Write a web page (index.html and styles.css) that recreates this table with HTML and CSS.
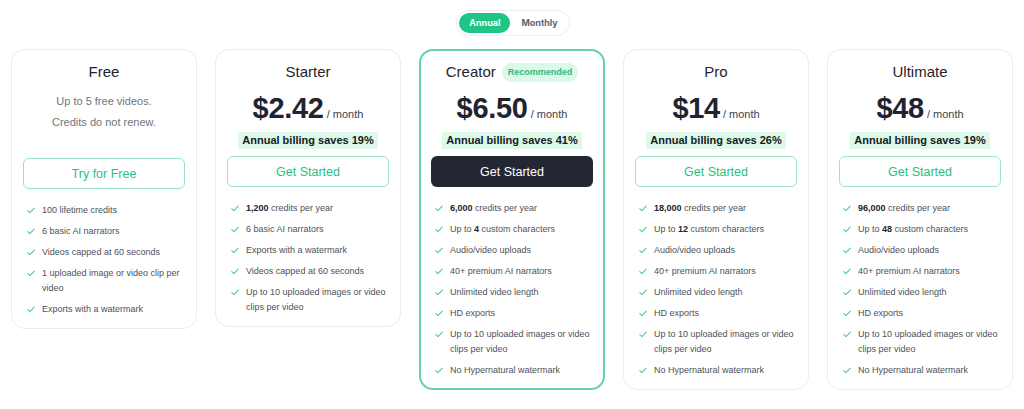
FILE: index.html
```html
<!DOCTYPE html>
<html>
<head>
<meta charset="utf-8">
<link rel="stylesheet" href="styles.css">
</head>
<body>
<div class="page">
  <div class="toggle-row">
    <div class="toggle">
      <span class="opt active">Annual</span>
      <span class="opt">Monthly</span>
    </div>
  </div>
  <div class="plans">
    <div class="card">
      <div class="title">Free</div>
      <div class="sub sub-first">Up to 5 free videos.</div>
      <div class="sub">Credits do not renew.</div>
      <div class="btn outline free-btn">Try for Free</div>
      <ul class="features">
        <li><svg class="chk" viewBox="0 0 10 8"><path d="M1 4.2 L3.6 6.6 L9 1"/></svg><span>100 lifetime credits</span></li>
        <li><svg class="chk" viewBox="0 0 10 8"><path d="M1 4.2 L3.6 6.6 L9 1"/></svg><span>6 basic AI narrators</span></li>
        <li><svg class="chk" viewBox="0 0 10 8"><path d="M1 4.2 L3.6 6.6 L9 1"/></svg><span>Videos capped at 60 seconds</span></li>
        <li><svg class="chk" viewBox="0 0 10 8"><path d="M1 4.2 L3.6 6.6 L9 1"/></svg><span>1 uploaded image or video clip per video</span></li>
        <li><svg class="chk" viewBox="0 0 10 8"><path d="M1 4.2 L3.6 6.6 L9 1"/></svg><span>Exports with a watermark</span></li>
      </ul>
    </div>
    <div class="card">
      <div class="title">Starter</div>
      <div class="price"><span class="amt">$2.42</span><span class="per">/ month</span></div>
      <div class="save-row"><span class="save">Annual billing saves 19%</span></div>
      <div class="btn outline">Get Started</div>
      <ul class="features">
        <li><svg class="chk" viewBox="0 0 10 8"><path d="M1 4.2 L3.6 6.6 L9 1"/></svg><span><b>1,200</b> credits per year</span></li>
        <li><svg class="chk" viewBox="0 0 10 8"><path d="M1 4.2 L3.6 6.6 L9 1"/></svg><span>6 basic AI narrators</span></li>
        <li><svg class="chk" viewBox="0 0 10 8"><path d="M1 4.2 L3.6 6.6 L9 1"/></svg><span>Exports with a watermark</span></li>
        <li><svg class="chk" viewBox="0 0 10 8"><path d="M1 4.2 L3.6 6.6 L9 1"/></svg><span>Videos capped at 60 seconds</span></li>
        <li><svg class="chk" viewBox="0 0 10 8"><path d="M1 4.2 L3.6 6.6 L9 1"/></svg><span>Up to 10 uploaded images or video clips per video</span></li>
      </ul>
    </div>
    <div class="card featured">
      <div class="title creator-title">Creator <span class="badge">Recommended</span></div>
      <div class="price"><span class="amt">$6.50</span><span class="per">/ month</span></div>
      <div class="save-row"><span class="save">Annual billing saves 41%</span></div>
      <div class="btn dark">Get Started</div>
      <ul class="features">
        <li><svg class="chk" viewBox="0 0 10 8"><path d="M1 4.2 L3.6 6.6 L9 1"/></svg><span><b>6,000</b> credits per year</span></li>
        <li><svg class="chk" viewBox="0 0 10 8"><path d="M1 4.2 L3.6 6.6 L9 1"/></svg><span>Up to <b>4</b> custom characters</span></li>
        <li><svg class="chk" viewBox="0 0 10 8"><path d="M1 4.2 L3.6 6.6 L9 1"/></svg><span>Audio/video uploads</span></li>
        <li><svg class="chk" viewBox="0 0 10 8"><path d="M1 4.2 L3.6 6.6 L9 1"/></svg><span>40+ premium AI narrators</span></li>
        <li><svg class="chk" viewBox="0 0 10 8"><path d="M1 4.2 L3.6 6.6 L9 1"/></svg><span>Unlimited video length</span></li>
        <li><svg class="chk" viewBox="0 0 10 8"><path d="M1 4.2 L3.6 6.6 L9 1"/></svg><span>HD exports</span></li>
        <li><svg class="chk" viewBox="0 0 10 8"><path d="M1 4.2 L3.6 6.6 L9 1"/></svg><span>Up to 10 uploaded images or video clips per video</span></li>
        <li><svg class="chk" viewBox="0 0 10 8"><path d="M1 4.2 L3.6 6.6 L9 1"/></svg><span>No Hypernatural watermark</span></li>
      </ul>
    </div>
    <div class="card">
      <div class="title">Pro</div>
      <div class="price"><span class="amt">$14</span><span class="per">/ month</span></div>
      <div class="save-row"><span class="save">Annual billing saves 26%</span></div>
      <div class="btn outline">Get Started</div>
      <ul class="features">
        <li><svg class="chk" viewBox="0 0 10 8"><path d="M1 4.2 L3.6 6.6 L9 1"/></svg><span><b>18,000</b> credits per year</span></li>
        <li><svg class="chk" viewBox="0 0 10 8"><path d="M1 4.2 L3.6 6.6 L9 1"/></svg><span>Up to <b>12</b> custom characters</span></li>
        <li><svg class="chk" viewBox="0 0 10 8"><path d="M1 4.2 L3.6 6.6 L9 1"/></svg><span>Audio/video uploads</span></li>
        <li><svg class="chk" viewBox="0 0 10 8"><path d="M1 4.2 L3.6 6.6 L9 1"/></svg><span>40+ premium AI narrators</span></li>
        <li><svg class="chk" viewBox="0 0 10 8"><path d="M1 4.2 L3.6 6.6 L9 1"/></svg><span>Unlimited video length</span></li>
        <li><svg class="chk" viewBox="0 0 10 8"><path d="M1 4.2 L3.6 6.6 L9 1"/></svg><span>HD exports</span></li>
        <li><svg class="chk" viewBox="0 0 10 8"><path d="M1 4.2 L3.6 6.6 L9 1"/></svg><span>Up to 10 uploaded images or video clips per video</span></li>
        <li><svg class="chk" viewBox="0 0 10 8"><path d="M1 4.2 L3.6 6.6 L9 1"/></svg><span>No Hypernatural watermark</span></li>
      </ul>
    </div>
    <div class="card">
      <div class="title">Ultimate</div>
      <div class="price"><span class="amt">$48</span><span class="per">/ month</span></div>
      <div class="save-row"><span class="save">Annual billing saves 19%</span></div>
      <div class="btn outline">Get Started</div>
      <ul class="features">
        <li><svg class="chk" viewBox="0 0 10 8"><path d="M1 4.2 L3.6 6.6 L9 1"/></svg><span><b>96,000</b> credits per year</span></li>
        <li><svg class="chk" viewBox="0 0 10 8"><path d="M1 4.2 L3.6 6.6 L9 1"/></svg><span>Up to <b>48</b> custom characters</span></li>
        <li><svg class="chk" viewBox="0 0 10 8"><path d="M1 4.2 L3.6 6.6 L9 1"/></svg><span>Audio/video uploads</span></li>
        <li><svg class="chk" viewBox="0 0 10 8"><path d="M1 4.2 L3.6 6.6 L9 1"/></svg><span>40+ premium AI narrators</span></li>
        <li><svg class="chk" viewBox="0 0 10 8"><path d="M1 4.2 L3.6 6.6 L9 1"/></svg><span>Unlimited video length</span></li>
        <li><svg class="chk" viewBox="0 0 10 8"><path d="M1 4.2 L3.6 6.6 L9 1"/></svg><span>HD exports</span></li>
        <li><svg class="chk" viewBox="0 0 10 8"><path d="M1 4.2 L3.6 6.6 L9 1"/></svg><span>Up to 10 uploaded images or video clips per video</span></li>
        <li><svg class="chk" viewBox="0 0 10 8"><path d="M1 4.2 L3.6 6.6 L9 1"/></svg><span>No Hypernatural watermark</span></li>
      </ul>
    </div>
  </div>
</div>
</body>
</html>
```
FILE: styles.css
```css
* { box-sizing: border-box; }
html, body { margin: 0; padding: 0; background: #ffffff; }
body { font-family: "Liberation Sans", Arial, sans-serif; color: #1f2430; }
.page { padding: 10px 11px 0; }
.toggle-row { display: flex; justify-content: center; }
.toggle {
  display: flex; align-items: center; gap: 2px;
  border: 1px solid #eceef1; border-radius: 14px; padding: 2px;
  height: 26px; margin-left: 2px;
}
.opt {
  font-family: Inter, "Liberation Sans", sans-serif;
  font-size: 9px; font-weight: 700; color: #5d6470;
  height: 20px; line-height: 20px; padding: 0 9px; border-radius: 10px;
}
.opt.active { background: #1fc584; color: #ffffff; padding: 0 10px; }
.plans {
  display: flex; align-items: flex-start; gap: 18px; margin-top: 13px;
}
.card {
  width: 186px; flex: none;
  border: 1px solid #e9ecef; border-radius: 14px;
  padding: 11px 11px 11px; display: flex; flex-direction: column;
}
.card.featured { border: 2px solid #62d4a9; padding: 10px 10px 10px; }
.title {
  font-size: 15px; line-height: 22px; text-align: center; color: #1f2430;
  font-weight: 500;
}
.creator-title { display: flex; align-items: center; justify-content: center; gap: 6px; }
.badge {
  font-size: 9px; font-weight: 700; color: #2fb97d; background: #dcf8ea;
  border-radius: 10px; padding: 0 6px; height: 19px; line-height: 19px;
}
.sub { font-size: 11px; color: #70757d; text-align: center; line-height: 21px; }
.sub-first { margin-top: 8px; }
.price { text-align: center; margin-top: 8px; height: 34px; line-height: 34px; }
.amt { font-size: 29px; font-weight: 700; color: #1f2430; letter-spacing: -0.3px; }
.per { font-size: 11px; color: #3c424c; margin-left: 3px; }
.save-row { text-align: center; margin-top: 5px; }
.save {
  display: inline-block; background: #dcf9ea; color: #151a22;
  font-size: 11px; font-weight: 700; line-height: 17px; padding: 0 4px;
}
.btn {
  height: 31px; border-radius: 6px; display: flex; align-items: center; justify-content: center;
  font-size: 12.5px; margin-top: 7px;
}
.btn.outline { border: 1px solid #9ee3c5; color: #2bbf80; }
.btn.dark { background: #232733; color: #ffffff; }
.free-btn { margin-top: 25px; }
.features { list-style: none; margin: 14px 0 0; padding: 0 0 0 1px; }
.features li {
  display: flex; gap: 7px; font-size: 9px; color: #4c525b; line-height: 15px;
  margin-bottom: 6px;
}
.features li:last-child { margin-bottom: 0; }
.features b { color: #1f2430; font-weight: 700; }
.chk { width: 8px; height: 7px; flex: none; margin-top: 4px; fill: none; stroke: #4fcb96; stroke-width: 1.4; stroke-linecap: round; stroke-linejoin: round; margin-left: 3px; }
```
